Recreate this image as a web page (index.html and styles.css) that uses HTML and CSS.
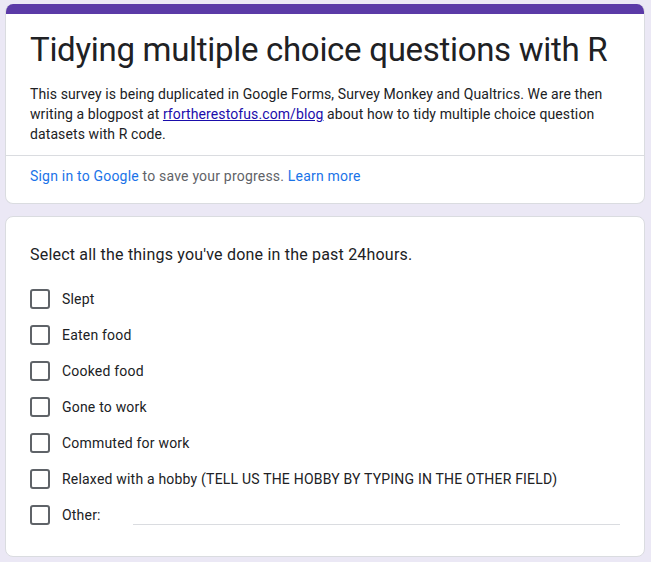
FILE: index.html
```html
<!DOCTYPE html>
<html>
<head>
<meta charset="utf-8">
<link rel="stylesheet" href="styles.css">
</head>
<body>
<div class="page">
  <div class="card header-card">
    <div class="bar"></div>
    <div class="header-body">
      <h1 class="title">Tidying multiple choice questions with R</h1>
      <p class="desc">This survey is being duplicated in Google Forms, Survey Monkey and Qualtrics. We are then writing a blogpost at <a class="link" href="#">rfortherestofus.com/blog</a> about how to tidy multiple choice question datasets with R code.</p>
    </div>
    <div class="signin">
      <a class="blue" href="#">Sign in to Google</a> to save your progress. <a class="blue" href="#">Learn more</a>
    </div>
  </div>
  <div class="card question-card">
    <div class="question">Select all the things you've done in the past 24hours.</div>
    <div class="options">
      <div class="option"><span class="box"></span><span class="label">Slept</span></div>
      <div class="option"><span class="box"></span><span class="label">Eaten food</span></div>
      <div class="option"><span class="box"></span><span class="label">Cooked food</span></div>
      <div class="option"><span class="box"></span><span class="label">Gone to work</span></div>
      <div class="option"><span class="box"></span><span class="label">Commuted for work</span></div>
      <div class="option"><span class="box"></span><span class="label">Relaxed with a hobby (TELL US THE HOBBY BY TYPING IN THE OTHER FIELD)</span></div>
      <div class="option"><span class="box"></span><span class="label other-label">Other:</span><span class="other-line"></span></div>
    </div>
  </div>
</div>
</body>
</html>
```

FILE: styles.css
```css
* { box-sizing: border-box; }
html, body { margin: 0; padding: 0; }
body {
  background: #ebe8f5;
  font-family: Roboto, "Liberation Sans", Arial, sans-serif;
  color: #202124;
}
.page {
  padding: 4px 6px 5px 5px;
  display: flex;
  flex-direction: column;
  gap: 12px;
}
.card {
  background: #fff;
  border: 1px solid #dadce0;
  border-radius: 8px;
  overflow: hidden;
}
.header-card { border-top: none; }
.bar {
  height: 10px;
  background: #5b3aa7;
}
.header-body {
  padding: 12px 24px 11px 24px;
  border-bottom: 1px solid #dadce0;
}
.title {
  margin: 0;
  font-size: 33px;
  font-weight: 400;
  line-height: 48px;
  color: #202124;
  letter-spacing: -0.3px;
  white-space: nowrap;
}
.desc {
  margin: 10px 0 0 0;
  font-size: 14px;
  line-height: 20px;
  letter-spacing: 0.1px;
  color: #202124;
}
.link { color: #1a0dab; text-decoration: underline; }
.signin {
  padding: 10px 24px 17px 24px;
  font-size: 14px;
  line-height: 20px;
  letter-spacing: 0.2px;
  color: #5f6368;
}
.blue { color: #1a73e8; text-decoration: none; }
.question-card {
  padding: 26px 24px 23px 24px;
}
.question {
  font-size: 16px;
  line-height: 24px;
  letter-spacing: 0.2px;
  color: #202124;
  margin-bottom: 14px;
}
.options { display: flex; flex-direction: column; }
.option {
  display: flex;
  align-items: center;
  height: 36px;
}
.box {
  width: 20px;
  height: 20px;
  border: 2px solid #5f6368;
  border-radius: 3px;
  flex: none;
}
.label {
  margin-left: 12px;
  font-size: 14px;
  letter-spacing: 0.2px;
  color: #202124;
}
.other-label { width: 71px; flex: none; }
.other-line {
  flex: 1;
  align-self: flex-end;
  margin-bottom: 8px;
  border-bottom: 1px solid #dadce0;
}
```
